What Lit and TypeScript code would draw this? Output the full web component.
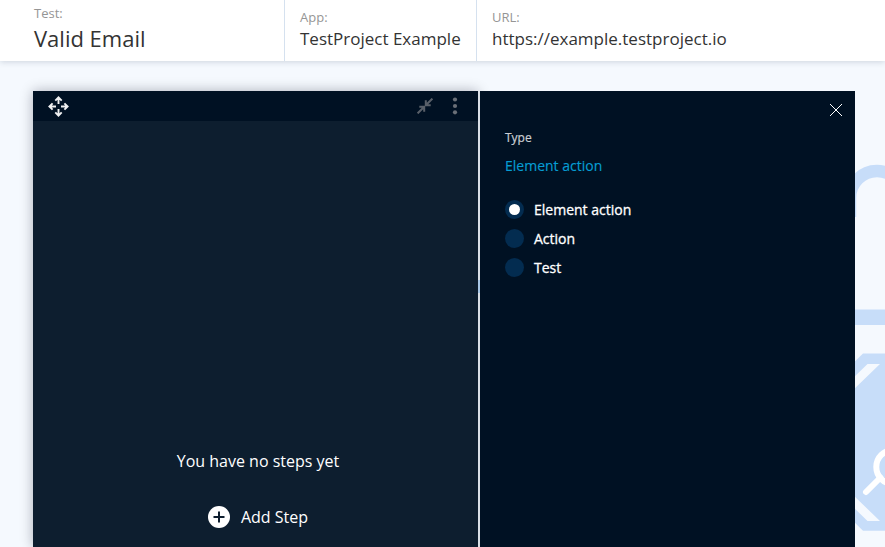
import { LitElement, html, css } from "lit";
import { customElement, property } from "lit/decorators.js";

const FONT = css`"Open Sans", "Noto Sans", sans-serif`;

@customElement("info-header")
class InfoHeader extends LitElement {
  static styles = css`
    :host { display: flex; height: 61px; background: #fff; position: relative; box-shadow: 0 1px 6px rgba(30, 50, 80, 0.18); box-sizing: border-box; font-family: ${FONT}; }
    .cell { box-sizing: border-box; padding: 8px 0 0 15px; border-left: 1px solid #d5e1ef; width: 192px; white-space: nowrap; }
    .cell.first { width: 284px; padding: 4px 0 0 34px; border-left: 0; }
    .cell.last { flex: 1; }
    .label { font-size: 13px; line-height: 18px; color: #959595; }
    .value { font-size: 17px; line-height: 26px; color: #333; }
    .first .value { font-size: 22px; line-height: 32px; }
  `;
  render() {
    return html`
      <div class="cell first"><div class="label">Test:</div><div class="value">Valid Email</div></div>
      <div class="cell"><div class="label">App:</div><div class="value">TestProject Example</div></div>
      <div class="cell last"><div class="label">URL:</div><div class="value">https://example.testproject.io</div></div>
    `;
  }
}

@customElement("radio-option")
class RadioOption extends LitElement {
  @property() label = "";
  @property({ type: Boolean }) checked = false;
  static styles = css`
    :host { display: flex; align-items: center; height: 29px; font: 400 14px/20px ${FONT}; color: #fff; }
    .ring { width: 19px; height: 19px; border-radius: 50%; background: #032c50; display: grid; place-items: center; }
    .dot { width: 11px; height: 11px; border-radius: 50%; background: #fff; }
    .text { margin-left: 10px; -webkit-text-stroke: 0.3px #fff; }
  `;
  render() {
    return html`<span class="ring">${this.checked ? html`<span class="dot"></span>` : ""}</span><span class="text">${this.label}</span>`;
  }
}

@customElement("app-root")
class AppRoot extends LitElement {
  static styles = css`
    :host { display: block; position: relative; height: 547px; overflow: hidden; background: #f5f9fe; font-family: ${FONT}; }
    .art { position: absolute; left: 835px; top: 140px; }
    .work { display: flex; position: relative; margin: 30px 30px 0 33px; height: 456px; }
    .steps { width: 445px; background: #0d1e2f; display: flex; flex-direction: column; box-shadow: 0 0 12px rgba(0, 10, 25, 0.3); }
    .bar { height: 30px; background: #001123; display: flex; align-items: center; box-sizing: border-box; padding: 0 19px 0 15px; }
    .bar svg { display: block; }
    .shrink { margin-left: auto; }
    .more { margin-left: 16px; }
    .empty { flex: 1; display: flex; flex-direction: column; align-items: center; color: #fff; font-size: 16px; line-height: 24px; padding-top: 328px; white-space: nowrap; box-sizing: border-box; padding-left: 5px; }
    .add { display: flex; align-items: center; gap: 11px; margin-top: 32px; }
    .split { width: 2px; background: linear-gradient(#d9dfe6 189px, #a8c7e6 189px, #a8c7e6 202px, #d9dfe6 202px); }
    .side { width: 375px; background: #001123; box-sizing: border-box; padding: 12px 12px 0 25px; }
    .closeRow { display: flex; justify-content: flex-end; height: 14px; }
    .type { font-size: 12px; line-height: 18px; color: #c9cdd2; margin-top: 12px; -webkit-text-stroke: 0.2px #c9cdd2; }
    .kind { font-size: 14px; line-height: 20px; color: #069dd3; margin-top: 9px; -webkit-text-stroke: 0.15px #069dd3; }
    .options { margin-top: 19px; }
  `;
  render() {
    return html`
      <svg class="art" width="50" height="407" viewBox="835 140 50 407" fill="none">
        <path d="M850 217V198a27 27 0 0 1 54 0" stroke="#c7ddf9" stroke-width="12.5" />
        <path d="M835 309.5h50v15.5h-50z" fill="#c7ddf9" />
        <path d="M835 381L863 353.5h22v177.3h-22L835 503z" fill="#c7ddf9" />
        <path d="M867.5 364H880L850 393v-12zM867.5 521H880L850 492v12z" fill="#f5f9fe" />
        <circle cx="893.3" cy="467" r="17" stroke="#fff" stroke-width="6" />
        <path d="M866 492l14.5-14.5" stroke="#fff" stroke-width="6" stroke-linecap="round" />
      </svg>
      <info-header></info-header>
      <div class="work">
        <section class="steps">
          <div class="bar">
            <svg width="21" height="21" viewBox="0 0 21 21" fill="none" stroke="#f0f1f2" stroke-width="1.9">
              <path d="M10.5 8V1.8M7.3 4.6l3.2-3.2 3.2 3.2M10.5 13v6.2M7.3 16.4l3.2 3.2 3.2-3.2M8 10.5H1.8M4.6 7.3L1.4 10.5l3.2 3.2M13 10.5h6.2M16.4 7.3l3.2 3.2-3.2 3.2" />
            </svg>
            <svg class="shrink" width="16" height="16" viewBox="0 0 16 16" fill="none" stroke="#596069" stroke-width="2">
              <path d="M.6 15.4L7 9M2.3 8.8H7.2V13.7M15.4.6L9 7M8.8 2.3V7.2H13.7" />
            </svg>
            <svg class="more" width="10" height="18" viewBox="0 0 10 18" fill="#6a7078">
              <circle cx="6" cy="2.5" r="2.1" /><circle cx="6" cy="9" r="2.1" /><circle cx="6" cy="15.3" r="2.1" />
            </svg>
          </div>
          <div class="empty">
            <div>You have no steps yet</div>
            <div class="add">
              <svg width="22" height="22" viewBox="0 0 22 22">
                <circle cx="11" cy="11" r="11" fill="#fff" />
                <path d="M11 5.5v11M5.5 11h11" stroke="#0e1e2f" stroke-width="2" />
              </svg>
              <span>Add Step</span>
            </div>
          </div>
        </section>
        <div class="split"></div>
        <section class="side">
          <div class="closeRow">
            <svg width="14" height="14" viewBox="0 0 14 14" stroke="#fff" stroke-width="1"><path d="M1 1l12 12M13 1L1 13" /></svg>
          </div>
          <div class="type">Type</div>
          <div class="kind">Element action</div>
          <div class="options">
            <radio-option label="Element action" checked></radio-option>
            <radio-option label="Action"></radio-option>
            <radio-option label="Test"></radio-option>
          </div>
        </section>
      </div>
    `;
  }
}
